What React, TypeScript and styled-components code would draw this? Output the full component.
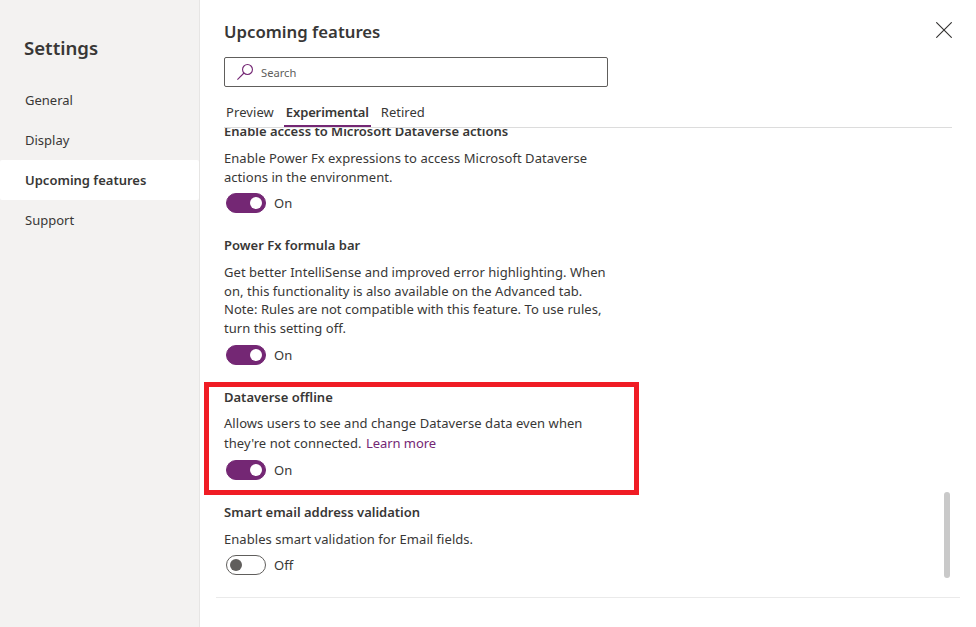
import React from 'react';
import styled, { createGlobalStyle } from 'styled-components';

const PURPLE = '#742774';

const GlobalStyle = createGlobalStyle`
  *, *::before, *::after { box-sizing: border-box; }
  body {
    margin: 0;
    background: #fff;
    color: #383736;
    font-family: "Noto Sans", "Segoe UI", sans-serif;
    font-size: 13px;
  }
  h1, h2, h3, p { margin: 0; }
  button { font: inherit; color: inherit; background: none; border: 0; padding: 0; }
`;

const Dialog = styled.div`
  display: flex;
  width: 976px;
  height: 627px;
  overflow: hidden;
`;

const Sidebar = styled.aside`
  flex: 0 0 200px;
  background: #f3f2f1;
  border-right: 1px solid #e6e5e4;
`;

const SidebarTitle = styled.h1`
  height: 80px;
  padding: 34px 0 0 24px;
  font-size: 18.6px;
  line-height: 28px;
  font-weight: 600;
`;

const NavItem = styled.button<{ $active?: boolean }>`
  display: flex;
  align-items: center;
  width: 100%;
  height: 40px;
  padding-left: 25px;
  border-radius: 2px;
  background: ${p => (p.$active ? '#fff' : 'transparent')};
  font-weight: ${p => (p.$active ? 600 : 400)};
`;

const Main = styled.main`
  flex: 1;
  display: flex;
  flex-direction: column;
`;

const Header = styled.header`
  display: flex;
  justify-content: space-between;
  height: 57px;
  padding: 20px 24px 0;
`;

const PageTitle = styled.h2`
  font-size: 16.75px;
  line-height: 24px;
  font-weight: 600;
`;

const CloseButton = styled.button`
  width: 16px;
  height: 16px;
  margin-top: 2px;
  svg { display: block; }
`;

const SearchBox = styled.div`
  display: flex;
  align-items: center;
  gap: 8px;
  width: 384px;
  height: 30px;
  margin-left: 24px;
  padding-left: 12px;
  border: 1px solid #605e5c;
  border-radius: 2px;
  color: #605e5c;
  font-size: 11.2px;
`;

const TabList = styled.div`
  display: flex;
  gap: 8px;
  height: 41px;
  margin: 0 24px;
  padding-top: 10px;
  border-bottom: 1px solid #dcdcdc;
`;

const Tab = styled.button<{ $active?: boolean; $tracking?: number }>`
  height: 30px;
  padding: 2px 2px 0;
  border-bottom: 2px solid ${p => (p.$active ? PURPLE : 'transparent')};
  font-weight: ${p => (p.$active ? 600 : 400)};
  letter-spacing: ${p => p.$tracking ?? 0}px;
`;

const ScrollArea = styled.div`
  display: flex;
  justify-content: space-between;
  height: 469px;
  overflow: hidden;
`;

const FeatureList = styled.div`
  width: 439px;
  padding-left: 24px;
  margin-top: -7px;
`;

const Feature = styled.section<{ $height: number }>`
  height: ${p => p.$height}px;
`;

/* Red callout frame that hugs one feature without affecting its neighbours. */
const HighlightedFeature = styled(Feature)`
  width: 435px;
  margin: -5px 0 7px -20px;
  padding: 0 15px;
  border: 5px solid #f01c24;
`;

const FeatureTitle = styled.h3`
  font-size: 13px;
  line-height: 20px;
  font-weight: 600;
`;

const Description = styled.p<{ $line?: number; $top?: number }>`
  margin-top: ${p => p.$top ?? 8}px;
  line-height: ${p => p.$line ?? 19}px;
  letter-spacing: 0.045px;
  white-space: nowrap;
`;

const Link = styled.a`
  margin-left: 1px;
  color: ${PURPLE};
  letter-spacing: -0.05px;
`;

const ToggleRow = styled.div<{ $top: number }>`
  display: flex;
  align-items: center;
  gap: 8px;
  height: 20px;
  margin: ${p => p.$top}px 0 0 2px;
`;

const Track = styled.span<{ $on: boolean }>`
  display: flex;
  align-items: center;
  justify-content: ${p => (p.$on ? 'flex-end' : 'flex-start')};
  width: 40px;
  height: 20px;
  padding: 0 3px;
  border: 1px solid ${p => (p.$on ? PURPLE : '#605e5c')};
  border-radius: 10px;
  background: ${p => (p.$on ? PURPLE : '#fff')};
`;

const Thumb = styled.span<{ $on: boolean }>`
  width: 12px;
  height: 12px;
  border-radius: 50%;
  background: ${p => (p.$on ? '#fff' : '#605e5c')};
`;

const ScrollTrack = styled.div`
  width: 32px;
  padding-top: 364px;
`;

const ScrollThumb = styled.div`
  width: 6px;
  height: 86px;
  border-radius: 3px;
  background: #c9c9c9;
`;

const Footer = styled.footer`
  width: 744px;
  margin-left: 16px;
  border-top: 1px solid #eaeaea;
`;

function Toggle({ on, top }: { on: boolean; top: number }) {
  return (
    <ToggleRow $top={top}>
      <Track $on={on} role="switch" aria-checked={on}>
        <Thumb $on={on} />
      </Track>
      <span>{on ? 'On' : 'Off'}</span>
    </ToggleRow>
  );
}

export default function App() {
  return (
    <>
      <GlobalStyle />
      <Dialog>
        <Sidebar>
          <SidebarTitle>Settings</SidebarTitle>
          <NavItem>General</NavItem>
          <NavItem>Display</NavItem>
          <NavItem $active>Upcoming features</NavItem>
          <NavItem>Support</NavItem>
        </Sidebar>
        <Main>
          <Header>
            <PageTitle>Upcoming features</PageTitle>
            <CloseButton aria-label="Close">
              <svg width="16" height="16" viewBox="0 0 16 16" stroke="#323130" strokeWidth="1.1">
                <path d="M0.3 0.3L15.7 15.7M15.7 0.3L0.3 15.7" />
              </svg>
            </CloseButton>
          </Header>
          <SearchBox>
            <svg width="16" height="16" viewBox="0 0 16 16" fill="none" stroke={PURPLE} strokeWidth="1.1">
              <circle cx="10.5" cy="5.5" r="4.95" />
              <path d="M7 9L0.4 15.6" />
            </svg>
            <span>Search</span>
          </SearchBox>
          <TabList>
            <Tab $tracking={0.08}>Preview</Tab>
            <Tab $active $tracking={-0.13}>Experimental</Tab>
            <Tab>Retired</Tab>
          </TabList>
          <ScrollArea>
            <FeatureList>
              <Feature $height={114}>
                <FeatureTitle>Enable access to Microsoft Dataverse actions</FeatureTitle>
                <Description>
                  Enable Power Fx expressions to access Microsoft Dataverse<br />
                  actions in the environment.
                </Description>
                <Toggle on top={6} />
              </Feature>
              <Feature $height={152}>
                <FeatureTitle>Power Fx formula bar</FeatureTitle>
                <Description $line={18.67}>
                  Get better IntelliSense and improved error highlighting. When<br />
                  on, this functionality is also available on the Advanced tab.<br />
                  Note: Rules are not compatible with this feature. To use rules,<br />
                  turn this setting off.
                </Description>
                <Toggle on top={7} />
              </Feature>
              <HighlightedFeature $height={113}>
                <FeatureTitle>Dataverse offline</FeatureTitle>
                <Description $line={20} $top={6}>
                  Allows users to see and change Dataverse data even when<br />
                  they're not connected. <Link>Learn more</Link>
                </Description>
                <Toggle on top={7} />
              </HighlightedFeature>
              <Feature $height={90}>
                <FeatureTitle>Smart email address validation</FeatureTitle>
                <Description>Enables smart validation for Email fields.</Description>
                <Toggle on={false} top={6} />
              </Feature>
            </FeatureList>
            <ScrollTrack>
              <ScrollThumb />
            </ScrollTrack>
          </ScrollArea>
          <Footer />
        </Main>
      </Dialog>
    </>
  );
}
